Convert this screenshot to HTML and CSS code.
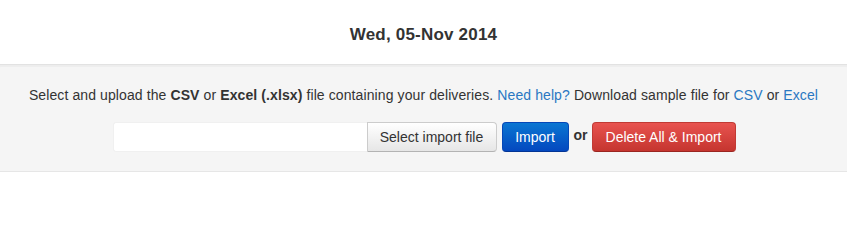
FILE: index.html
```html
<!DOCTYPE html>
<html>
<head>
<meta charset="utf-8">
<link rel="stylesheet" href="styles.css">
</head>
<body>
<div class="header">Wed, 05-Nov 2014</div>
<div class="band">
  <p class="intro">Select and upload the <b>CSV</b> or <b>Excel (.xlsx)</b> file containing your deliveries. <a href="#">Need help?</a> Download sample file for <a href="#">CSV</a> or <a href="#">Excel</a></p>
  <div class="controls">
    <div class="file-input"></div>
    <button class="btn btn-default">Select import file</button>
    <button class="btn btn-primary">Import</button>
    <span class="or">or</span>
    <button class="btn btn-danger">Delete All &amp; Import</button>
  </div>
</div>
</body>
</html>
```

FILE: styles.css
```css
html, body {
  margin: 0;
  padding: 0;
  background: #ffffff;
  font-family: "Liberation Sans", Arial, sans-serif;
  color: #333333;
}

.header {
  box-sizing: border-box;
  height: 64px;
  padding-top: 6px;
  display: flex;
  align-items: center;
  justify-content: center;
  font-size: 17px;
  font-weight: bold;
  letter-spacing: 0.2px;
  color: #333333;
}

.band {
  background: #f5f5f5;
  border-top: 1px solid #e2e2e2;
  border-bottom: 1px solid #e6e6e6;
  box-shadow: inset 0 2px 1px rgba(0, 0, 0, 0.03);
  padding: 20px 0 19px;
}

.intro {
  margin: 0;
  text-align: center;
  font-size: 14px;
  line-height: 20px;
  letter-spacing: 0.1px;
  color: #333333;
}

.intro b {
  color: #333333;
}

.intro a {
  color: #2a78c2;
  text-decoration: none;
}

.controls {
  margin-top: 17px;
  padding-left: 1px;
  display: flex;
  justify-content: center;
  align-items: center;
}

.file-input {
  box-sizing: border-box;
  width: 254px;
  height: 30px;
  background: #ffffff;
  border: 1px solid #f0f0f0;
  border-right: none;
  border-radius: 3px 0 0 3px;
}

.btn {
  box-sizing: border-box;
  height: 30px;
  padding: 4px 0;
  font-family: "Liberation Sans", Arial, sans-serif;
  font-size: 14px;
  line-height: 20px;
  border-radius: 4px;
  border: 1px solid;
  cursor: pointer;
}

.btn-default {
  width: 130px;
  color: #333333;
  background: linear-gradient(#ffffff, #e6e6e6);
  border-color: #cccccc #cccccc #b3b3b3;
  border-radius: 0 4px 4px 0;
  margin-right: 5px;
}

.btn-primary {
  width: 67px;
  color: #ffffff;
  background: linear-gradient(#0a76d2, #0448bf);
  border-color: #0447b8 #0447b8 #033494;
}

.or {
  font-size: 14px;
  font-weight: bold;
  color: #333333;
  margin: 0 4px 0 5px;
  position: relative;
  top: -2px;
}

.btn-danger {
  width: 144px;
  color: #ffffff;
  background: linear-gradient(#e8534f, #c5352f);
  border-color: #c13a34 #c13a34 #9a2520;
}
```
